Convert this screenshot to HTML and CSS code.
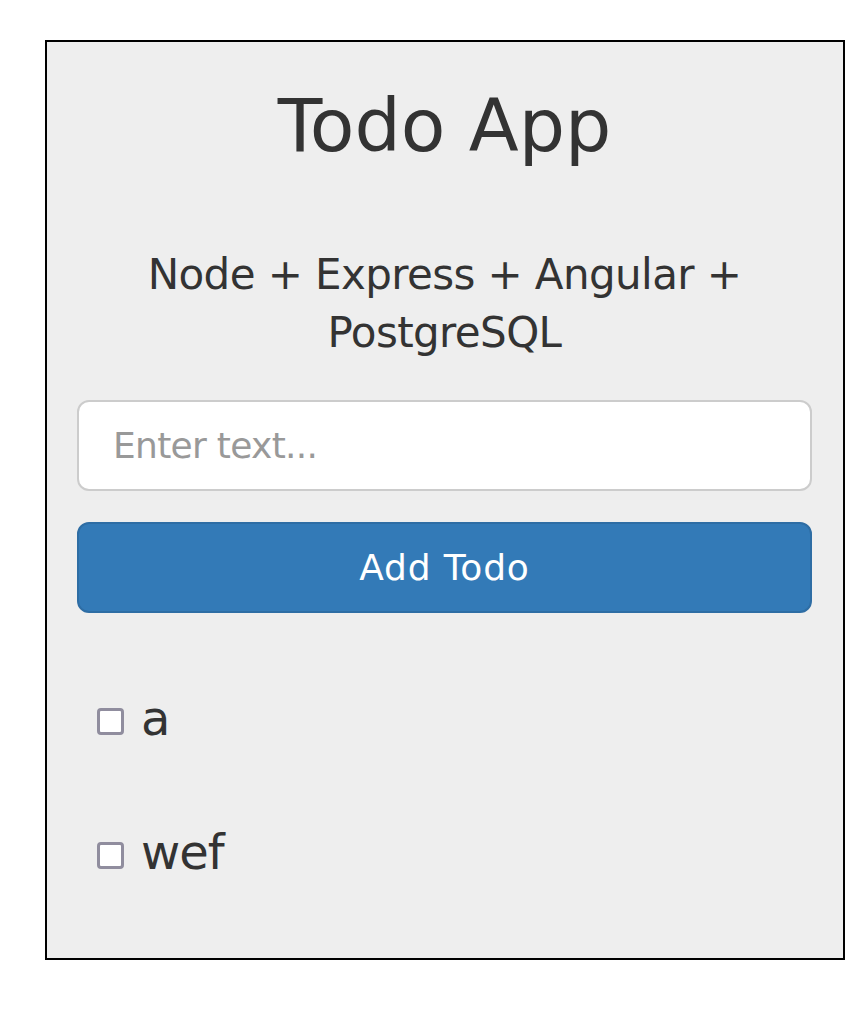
FILE: index.html
```html
<!DOCTYPE html>
<html lang="en">
<head>
<meta charset="utf-8">
<title>Todo App</title>
<link rel="stylesheet" href="styles.css">
</head>
<body>
<div class="card">
  <h1 class="title">Todo App</h1>
  <h3 class="subtitle">Node + Express + Angular + PostgreSQL</h3>
  <form class="todo-form">
    <input class="todo-input" type="text" placeholder="Enter text...">
    <button class="todo-btn" type="button">Add Todo</button>
  </form>
  <ul class="todo-list">
    <li class="todo-item"><span class="check"></span><span class="todo-text">a</span></li>
    <li class="todo-item"><span class="check"></span><span class="todo-text">wef</span></li>
  </ul>
</div>
</body>
</html>
```
FILE: styles.css
```css
html, body {
  margin: 0;
  padding: 0;
  background: #fff;
}
body {
  font-family: "DejaVu Sans", sans-serif;
  color: #333;
}
.card {
  box-sizing: border-box;
  width: 800px;
  height: 920px;
  margin: 40px 0 0 45px;
  border: 2px solid #000;
  background: #eee;
  padding: 0 31px 0 30px;
}
.title {
  margin: 44px 0 0;
  font-size: 73px;
  line-height: 80px;
  font-weight: normal;
  text-align: center;
}
.subtitle {
  margin: 80px 0 0;
  font-size: 42px;
  line-height: 58px;
  letter-spacing: -0.6px;
  font-weight: normal;
  text-align: center;
}
.todo-form {
  margin: 38px 0 0;
  display: flex;
  flex-direction: column;
  gap: 31px;
}
.todo-input {
  box-sizing: border-box;
  width: 100%;
  height: 91px;
  margin: 0;
  padding: 0 34px;
  border: 2px solid #ccc;
  border-radius: 12px;
  background: #fff;
  font-family: "DejaVu Sans", sans-serif;
  font-size: 36px;
  letter-spacing: -0.7px;
  color: #555;
  outline: none;
}
.todo-input::placeholder {
  color: #999;
}
.todo-btn {
  box-sizing: border-box;
  width: 100%;
  height: 91px;
  margin: 0;
  padding: 0;
  border: 2px solid #2e6da4;
  border-radius: 12px;
  background: #337ab7;
  color: #fff;
  font-family: "DejaVu Sans", sans-serif;
  font-size: 36px;
  letter-spacing: 0.8px;
}
.todo-list {
  list-style: none;
  margin: 75px 0 0;
  padding: 0 0 0 20px;
}
.todo-item {
  font-size: 48px;
  line-height: 60px;
  letter-spacing: -1px;
  margin-bottom: 74px;
}
.check {
  display: inline-block;
  box-sizing: border-box;
  width: 27px;
  height: 27px;
  border: 3px solid #908d9e;
  border-radius: 4px;
  background: #fff;
  vertical-align: baseline;
  margin-right: 17px;
}
```
